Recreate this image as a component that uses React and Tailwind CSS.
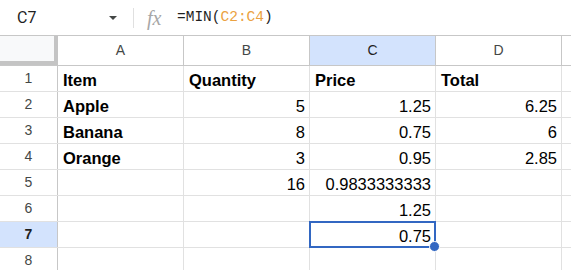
import React from 'react';

const COLS = ['A', 'B', 'C', 'D'];

// row data: [A, B, C, D]; bold marks the text rows
const ROWS = [
  { n: 1, cells: ['Item', 'Quantity', 'Price', 'Total'], header: true },
  { n: 2, cells: ['Apple', '5', '1.25', '6.25'] },
  { n: 3, cells: ['Banana', '8', '0.75', '6'] },
  { n: 4, cells: ['Orange', '3', '0.95', '2.85'] },
  { n: 5, cells: ['', '16', '0.9833333333', ''] },
  { n: 6, cells: ['', '', '1.25', ''] },
  { n: 7, cells: ['', '', '0.75', ''] },
  { n: 8, cells: ['', '', '', ''] },
];

const isNum = (v) => v !== '' && !isNaN(Number(v));

function Cell({ value, bold, selected }) {
  return (
    <div
      className={`relative h-full w-[126px] shrink-0 border-r border-[#e1e1e1] flex items-center pt-[3px] px-[4px] text-[16.5px] text-black ${
        isNum(value) ? 'justify-end' : 'justify-start pl-[5px]'
      } ${bold ? 'font-bold' : ''}`}
    >
      <span className="whitespace-nowrap leading-none">{value}</span>
      {selected && (
        <div className="absolute z-10 -left-px -top-px -right-px -bottom-px border-2 border-[#3267c2] pointer-events-none">
          <div className="absolute -right-[6px] -bottom-[6px] w-[11px] h-[11px] rounded-full bg-[#3267c2] border border-white" />
        </div>
      )}
    </div>
  );
}

export default function App() {
  return (
    <div
      className="w-[571px] h-[270px] overflow-hidden bg-white flex flex-col"
      style={{ fontFamily: '"Liberation Sans", Arial, sans-serif' }}
    >
      {/* name box + formula bar */}
      <div className="h-[36px] shrink-0 flex items-center border-b border-[#c7c7c7]">
        <div className="w-[104px] pl-[17px] text-[16px] text-[#1f1f1f]" style={{ fontFamily: 'Roboto, sans-serif' }}>
          C7
        </div>
        <div className="w-0 h-0 border-l-[4px] border-r-[4px] border-t-[4px] border-l-transparent border-r-transparent border-t-[#444746] ml-[5px]" />
        <div className="ml-[16px] w-px h-[20px] bg-[#e0e0e0]" />
        <div className="ml-[13px] w-[18px] text-[20px] italic text-[#a7a7a7] leading-none" style={{ fontFamily: '"Liberation Serif", serif' }}>
          fx
        </div>
        <div className="ml-[12px] text-[14.5px] text-[#1f1f1f]" style={{ fontFamily: '"Liberation Mono", monospace' }}>
          =MIN(<span className="text-[#eba241]">C2:C4</span>)
        </div>
      </div>

      {/* column headers */}
      <div className="h-[30px] shrink-0 flex border-b border-[#c7c7c7]">
        <div className="w-[58px] shrink-0 h-full bg-[#f8f9fa] border-r-4 border-b-4 border-[#c4c4c4]" />
        {COLS.map((c) => (
          <div
            key={c}
            className={`w-[126px] shrink-0 h-full border-r border-[#c7c7c7] flex items-center justify-center text-[14px] ${
              c === 'C' ? 'bg-[#d3e3fd] text-[#1f1f1f]' : 'bg-white text-[#444746]'
            }`}
          >
            {c}
          </div>
        ))}
        <div className="flex-1 bg-white" />
      </div>

      {/* rows */}
      {ROWS.map((r) => (
        <div key={r.n} className="h-[26px] shrink-0 flex border-b border-[#e1e1e1]">
          <div
            className={`w-[58px] shrink-0 h-full border-r border-[#c7c7c7] flex items-center justify-center text-[14px] ${
              r.n === 7 ? 'bg-[#d3e3fd] text-[#1f1f1f] font-bold' : 'bg-white text-[#444746]'
            }`}
          >
            {r.n}
          </div>
          {r.cells.map((v, i) => (
            <Cell
              key={i}
              value={v}
              bold={r.header || (i === 0 && v !== '')}
              selected={r.n === 7 && i === 2}
            />
          ))}
          <div className="flex-1" />
        </div>
      ))}
    </div>
  );
}
